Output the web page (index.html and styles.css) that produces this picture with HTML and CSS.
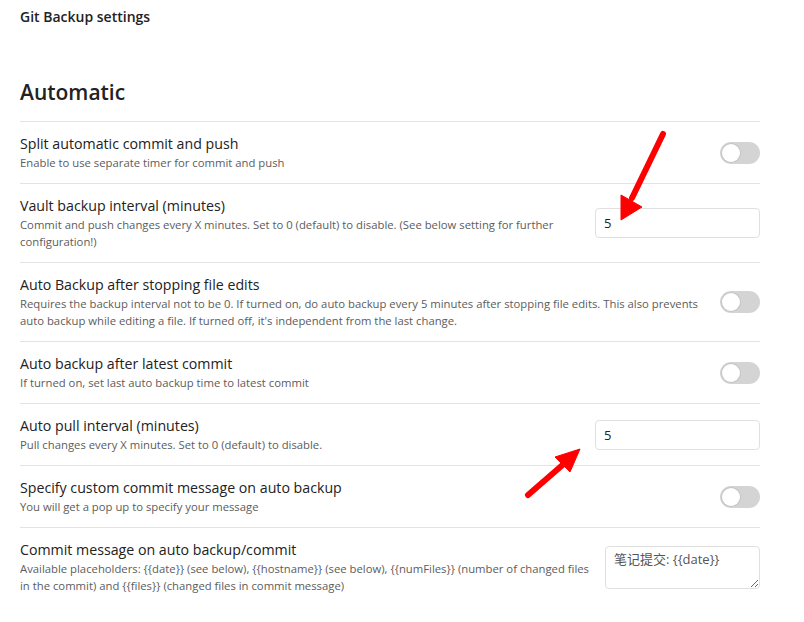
FILE: index.html
```html
<!DOCTYPE html>
<html lang="en">
<head>
<meta charset="utf-8">
<title>Git Backup settings</title>
<link rel="stylesheet" href="styles.css">
</head>
<body>
<div class="page">
  <div class="page-title">Git Backup settings</div>
  <h2 class="section-heading">Automatic</h2>

  <div class="setting-item">
    <div class="info">
      <div class="name">Split automatic commit and push</div>
      <div class="desc">Enable to use separate timer for commit and push</div>
    </div>
    <div class="control"><div class="toggle"><span class="knob"></span></div></div>
  </div>

  <div class="setting-item">
    <div class="info">
      <div class="name">Vault backup interval (minutes)</div>
      <div class="desc">Commit and push changes every X minutes. Set to 0 (default) to disable. (See below setting for further<br>configuration!)</div>
    </div>
    <div class="control"><input class="text-input" type="text" value="5"></div>
  </div>

  <div class="setting-item">
    <div class="info">
      <div class="name">Auto Backup after stopping file edits</div>
      <div class="desc">Requires the backup interval not to be 0. If turned on, do auto backup every 5 minutes after stopping file edits. This also prevents<br>auto backup while editing a file. If turned off, it's independent from the last change.</div>
    </div>
    <div class="control"><div class="toggle"><span class="knob"></span></div></div>
  </div>

  <div class="setting-item">
    <div class="info">
      <div class="name">Auto backup after latest commit</div>
      <div class="desc">If turned on, set last auto backup time to latest commit</div>
    </div>
    <div class="control"><div class="toggle"><span class="knob"></span></div></div>
  </div>

  <div class="setting-item">
    <div class="info">
      <div class="name">Auto pull interval (minutes)</div>
      <div class="desc">Pull changes every X minutes. Set to 0 (default) to disable.</div>
    </div>
    <div class="control"><input class="text-input" type="text" value="5"></div>
  </div>

  <div class="setting-item">
    <div class="info">
      <div class="name">Specify custom commit message on auto backup</div>
      <div class="desc">You will get a pop up to specify your message</div>
    </div>
    <div class="control"><div class="toggle"><span class="knob"></span></div></div>
  </div>

  <div class="setting-item">
    <div class="info">
      <div class="name">Commit message on auto backup/commit</div>
      <div class="desc">Available placeholders: {{date}} (see below), {{hostname}} (see below), {{numFiles}} (number of changed files<br>in the commit) and {{files}} (changed files in commit message)</div>
    </div>
    <div class="control"><textarea class="text-area">笔记提交: {{date}}</textarea></div>
  </div>

  <svg class="annotations" width="804" height="622" viewBox="0 0 804 622" aria-hidden="true">
    <g fill="#ff0000" stroke="#ff0000" stroke-linejoin="round">
      <line x1="663" y1="134" x2="632" y2="198" stroke-width="6" stroke-linecap="round"/>
      <polygon points="621,195 642,207 621,220" stroke-width="1"/>
      <line x1="528" y1="495" x2="566" y2="462" stroke-width="6" stroke-linecap="round"/>
      <polygon points="555,457 570,472 580,449" stroke-width="1"/>
    </g>
  </svg>
</div>
</body>
</html>
```

FILE: styles.css
```css
html, body {
  margin: 0;
  padding: 0;
  background: #ffffff;
}

body {
  font-family: "Open Sans", "Noto Sans", "Noto Sans CJK SC", sans-serif;
  color: #222222;
}

.page {
  position: relative;
  width: 740px;
  padding: 7px 44px 0 20px;
}

.page-title {
  font-size: 14px;
  font-weight: 600;
  line-height: 20px;
  color: #222222;
}

.section-heading {
  margin: 50px 0 0 0;
  font-size: 21px;
  font-weight: 600;
  line-height: 30px;
  padding-bottom: 14px;
  color: #222222;
}

.setting-item {
  display: flex;
  align-items: center;
  gap: 16px;
  padding: 12px 0;
  border-top: 1px solid #e3e3e3;
}

.info {
  flex: 1 1 auto;
  min-width: 0;
}

.name {
  font-size: 14.2px;
  line-height: 20px;
  color: #222222;
}

.desc {
  font-size: 11.3px;
  line-height: 17px;
  color: #5c5c5c;
  white-space: nowrap;
}

.control {
  flex: 0 0 auto;
  display: flex;
  justify-content: flex-end;
}

.toggle {
  position: relative;
  width: 40px;
  height: 22px;
  border-radius: 11px;
  background: #d4d4d4;
  box-sizing: border-box;
}

.knob {
  position: absolute;
  left: 2px;
  top: 2px;
  width: 18px;
  height: 18px;
  border-radius: 50%;
  background: #ffffff;
  box-shadow: 0 0 0 1px #c4c4c4;
}

.text-input {
  width: 165px;
  height: 30px;
  box-sizing: border-box;
  border: 1px solid #e0e0e0;
  border-radius: 4px;
  padding: 0 8px;
  font-family: "Open Sans", "Noto Sans", sans-serif;
  font-size: 13px;
  color: #222222;
  background: #ffffff;
}

.text-area {
  width: 155px;
  height: 43px;
  box-sizing: border-box;
  border: 1px solid #e0e0e0;
  border-radius: 4px;
  padding: 3px 8px;
  font-family: "Open Sans", "Noto Sans CJK SC", sans-serif;
  font-size: 13px;
  line-height: 18px;
  color: #555555;
  background: #ffffff;
  resize: vertical;
  display: block;
}

.annotations {
  position: absolute;
  left: 0;
  top: 0;
  pointer-events: none;
}
```
